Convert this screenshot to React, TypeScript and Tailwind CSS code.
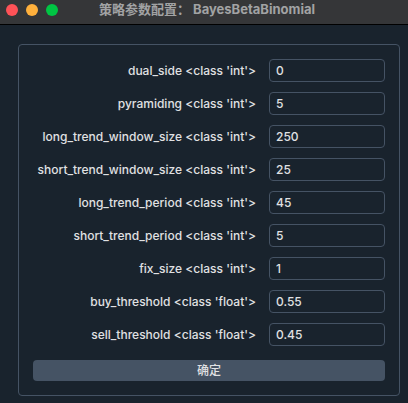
import { useState } from "react";

type Param = { name: string; type: "int" | "float"; value: string };

const PARAMS: Param[] = [
  { name: "dual_side", type: "int", value: "0" },
  { name: "pyramiding", type: "int", value: "5" },
  { name: "long_trend_window_size", type: "int", value: "250" },
  { name: "short_trend_window_size", type: "int", value: "25" },
  { name: "long_trend_period", type: "int", value: "45" },
  { name: "short_trend_period", type: "int", value: "5" },
  { name: "fix_size", type: "int", value: "1" },
  { name: "buy_threshold", type: "float", value: "0.55" },
  { name: "sell_threshold", type: "float", value: "0.45" },
];

function TitleBar() {
  return (
    <header className="flex h-[25px] items-start border-b border-black bg-[#353638] pl-[6px]">
      <div className="flex flex-1 gap-2 pt-1">
        <button type="button" aria-label="关闭" className="size-3 rounded-full bg-[#ff5257]" />
        <button type="button" aria-label="最小化" className="size-3 rounded-full bg-[#ffb03c]" />
        <button type="button" aria-label="缩放" className="size-3 rounded-full bg-[#00c543]" />
      </div>
      <h1 className="text-[13px] leading-[18px] font-bold whitespace-nowrap text-[#a2a3a4]">
        策略参数配置： BayesBetaBinomial
      </h1>
      <div className="flex-1" />
    </header>
  );
}

function ParamRow({ param }: { param: Param }) {
  const [value, setValue] = useState(param.value);
  return (
    <div className="grid grid-cols-[223px_1fr] items-center gap-[13px]">
      <label htmlFor={param.name} className="text-right whitespace-nowrap">
        {param.name} &lt;class '{param.type}'&gt;
      </label>
      <input
        id={param.name}
        value={value}
        onChange={(e) => setValue(e.target.value)}
        className="h-[23px] w-full min-w-0 rounded border border-[#455364] bg-[#19232d] px-[6px] outline-none focus:border-[#1a72bb]"
      />
    </div>
  );
}

export default function App() {
  return (
    <div className="min-h-screen bg-[#19232d] font-['Inter','Noto_Sans_CJK_SC',sans-serif] text-xs leading-4 font-medium text-[#e0e1e3]">
      <TitleBar />
      <main className="pt-[19px] pr-2 pb-[7px] pl-[18px]">
        <form
          onSubmit={(e) => e.preventDefault()}
          className="flex flex-col gap-[10px] rounded border border-[#455364] p-[14px]"
        >
          {PARAMS.map((param) => (
            <ParamRow key={param.name} param={param} />
          ))}
          <button type="submit" className="mt-1 h-[21px] rounded bg-[#455364]">
            确定
          </button>
        </form>
      </main>
    </div>
  );
}
